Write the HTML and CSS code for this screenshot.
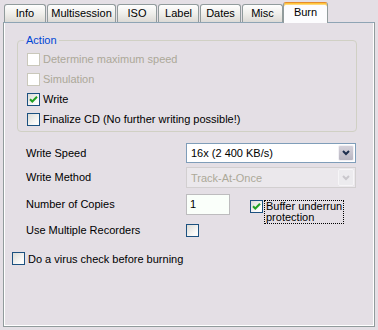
FILE: index.html
```html
<!DOCTYPE html>
<html lang="en">
<head>
    <meta charset="UTF-8">
    <title>Burn options</title>
    <link rel="stylesheet" href="styles.css">
</head>
<body>
    <div class="window">
        <div class="tabs">
            <div class="tab tab-info">Info</div>
            <div class="tab tab-multi">Multisession</div>
            <div class="tab tab-iso">ISO</div>
            <div class="tab tab-label">Label</div>
            <div class="tab tab-dates">Dates</div>
            <div class="tab tab-misc">Misc</div>
            <div class="tab tab-burn active">Burn</div>
        </div>

        <div class="panel">
            <fieldset class="group">
                <legend>Action</legend>
                <div class="check disabled"><span class="box"></span>Determine maximum speed</div>
                <div class="check disabled"><span class="box"></span>Simulation</div>
                <div class="check"><span class="box checked"><svg viewBox="0 0 11 11"><path d="M2 5.2 L4.3 7.5 L9 2.8"/></svg></span>Write</div>
                <div class="check"><span class="box"></span>Finalize CD (No further writing possible!)</div>
            </fieldset>

            <div class="settings">
                <div class="row-label">Write Speed</div>
                <div class="combo">
                    <span class="combo-text">16x (2 400 KB/s)</span>
                    <span class="combo-btn"><svg viewBox="0 0 8 6"><path d="M1 1 L4 4 L7 1"/></svg></span>
                </div>

                <div class="row-label">Write Method</div>
                <div class="combo disabled">
                    <span class="combo-text">Track-At-Once</span>
                    <span class="combo-btn"><svg viewBox="0 0 8 6"><path d="M1 1 L4 4 L7 1"/></svg></span>
                </div>

                <div class="row-label">Number of Copies</div>
                <div class="copies">
                    <div class="textbox">1</div>
                    <div class="buffer">
                        <span class="box checked"><svg viewBox="0 0 11 11"><path d="M2 5.2 L4.3 7.5 L9 2.8"/></svg></span>
                        <span class="focus-label">Buffer underrun<br>protection</span>
                    </div>
                </div>

                <div class="row-label short">Use Multiple Recorders</div>
                <div class="recorders"><span class="box"></span></div>
            </div>

            <div class="check virus"><span class="box"></span>Do a virus check before burning</div>
        </div>
    </div>
</body>
</html>
```

FILE: styles.css
```css
body {
    margin: 0;
    background: #e4dfe5;
    font-family: "Liberation Sans", Arial, sans-serif;
    font-size: 11px;
    color: #000;
}
.window {
    width: 378px;
    height: 330px;
    padding-top: 2px;
    box-sizing: border-box;
}
.tabs {
    display: flex;
    align-items: flex-end;
    gap: 1px;
    height: 20px;
    padding-left: 4px;
}
.tab {
    height: 18px;
    line-height: 17px;
    text-align: center;
    box-sizing: border-box;
    border: 1px solid #919b9c;
    border-bottom: none;
    border-radius: 3px 3px 0 0;
    background: linear-gradient(#fefefe, #eeede9 55%, #dcdad6);
}
.tab-info { width: 42px; }
.tab-multi { width: 69px; }
.tab-iso { width: 40px; }
.tab-label { width: 41px; }
.tab-dates { width: 41px; }
.tab-misc { width: 41px; }
.tab-burn { width: 45px; }
.tab.active {
    height: 21px;
    line-height: 18px;
    margin-bottom: -1px;
    margin-left: -1px;
    position: relative;
    z-index: 1;
    background: #fcfcfe;
    border-top: 1px solid #e68b2c;
    box-shadow: inset 0 1px #ffc73c, inset 0 2px #ffd77a;
}
.panel {
    margin-left: 3px;
    width: 372px;
    height: 305px;
    box-sizing: border-box;
    border: 1px solid #919b9c;
    border-top-color: #8ea4b4;
    box-shadow: inset 1px 0 #fff, inset -1px -1px #fff;
}
.group {
    margin: 11px 17px 0 13px;
    padding: 2px 0 2px 6px;
    border: 1px solid #d0d0c4;
    border-radius: 4px;
}
.group legend {
    padding: 0 2px;
    line-height: 13px;
    color: #0046d5;
}
.check {
    display: flex;
    align-items: center;
    height: 20px;
}
.group .check {
    margin-left: 3px;
}
.check.disabled {
    color: #aca899;
}
.box {
    display: block;
    flex: none;
    width: 13px;
    height: 13px;
    box-sizing: border-box;
    margin-right: 3px;
    border: 1px solid #1c5180;
    background: linear-gradient(135deg, #dcdcd7, #fbfbfa 75%);
}
.disabled .box {
    border-color: #cac8bb;
    background: #fff;
}
.box svg {
    display: block;
    width: 11px;
    height: 11px;
}
.box svg path {
    fill: none;
    stroke: #21a121;
    stroke-width: 2;
}
.settings {
    display: grid;
    grid-template-columns: 160px 170px;
    grid-template-rows: 24px 27px 28px 17px;
    margin: 11px 0 0 22px;
}
.row-label {
    line-height: 21px;
}
.row-label.short {
    line-height: 17px;
}
.combo {
    display: flex;
    align-items: center;
    height: 20px;
    box-sizing: border-box;
    border: 1px solid #7f9db9;
    background: #fff;
    padding: 1px;
}
.combo.disabled {
    height: 21px;
    border-color: #d2cfd0;
    background: #ebe8ec;
    color: #aca899;
}
.combo-text {
    flex: 1;
    padding-left: 3px;
}
.combo-btn {
    width: 16px;
    height: 100%;
    box-sizing: border-box;
    display: flex;
    align-items: center;
    justify-content: center;
    border: 1px solid #f2f1f5;
    border-radius: 2px;
    background: linear-gradient(#d4d1da, #b9b6c2);
}
.combo-btn svg {
    width: 8px;
    height: 6px;
}
.combo-btn svg path {
    fill: none;
    stroke: #1e2f4e;
    stroke-width: 2;
}
.combo.disabled .combo-btn {
    background: #ecebee;
    border-color: #f6f5f7;
}
.combo.disabled .combo-btn svg path {
    stroke: #c9c7cc;
}
.copies {
    display: flex;
    align-items: flex-start;
}
.textbox {
    width: 44px;
    height: 21px;
    box-sizing: border-box;
    border: 1px solid #bdbcbe;
    background: #fafffa;
    line-height: 19px;
    padding-left: 3px;
}
.buffer {
    display: flex;
    align-items: flex-start;
    margin: 6px 0 0 20px;
}
.buffer .box {
    margin-right: 1px;
}
.focus-label {
    border: 1px dotted #000;
    padding: 0 1px;
    line-height: 11px;
}
.recorders {
    padding-top: 2px;
}
.virus {
    margin: 11px 0 0 8px;
    height: 17px;
}
```
